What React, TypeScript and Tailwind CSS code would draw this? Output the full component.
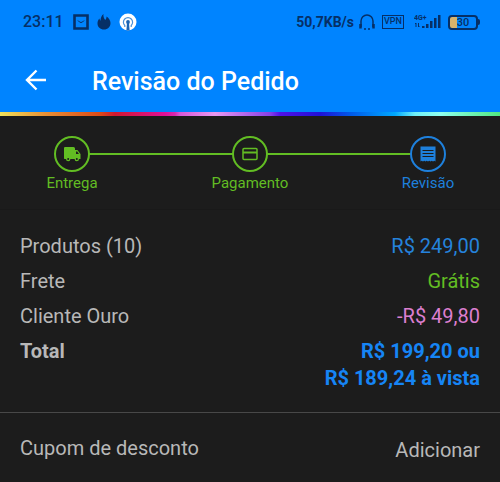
import type { ReactNode } from "react";

const steps: { label: string; color: string; icon: ReactNode }[] = [
  {
    label: "Entrega",
    color: "text-[#62bd23]",
    icon: (
      <svg viewBox="0 0 18 16" className="h-4 w-[18px]" fill="currentColor" aria-hidden="true">
        <path d="M2 1h8.500q1.500 0 1.500 1.500V4h2.400L17.500 8v5H16a2.200 2.200 0 0 1-4.400 0H7.400A2.200 2.200 0 0 1 3 13H1.500Q1 13 1 12V2.200Q1 1 2 1z" />
        <path d="M13 5.500h1.200L16 8h-3z" fill="#1c1c1c" />
        <circle cx="5.200" cy="13" r="1" fill="#1c1c1c" />
        <circle cx="13.800" cy="13" r="1" fill="#1c1c1c" />
      </svg>
    ),
  },
  {
    label: "Pagamento",
    color: "text-[#62bd23]",
    icon: (
      <svg viewBox="0 0 16 14" className="h-3.5 w-4" fill="none" stroke="currentColor" strokeWidth="1.500" aria-hidden="true">
        <rect x="1" y="1.500" width="14" height="11" rx="1" />
        <path d="M1 5.500h14" strokeWidth="2" />
      </svg>
    ),
  },
  {
    label: "Revisão",
    color: "text-[#1e80dc]",
    icon: (
      <svg viewBox="0 0 16 16" className="size-4" aria-hidden="true">
        <path fill="currentColor" d="M.5.500h15v15l-1.200-.8-1.300.8-1.200-.8-1.300.8-1.200-.8L8 15.500l-1.300-.8-1.200.8-1.300-.8-1.200.8-1.300-.8-1.200.8z" />
        <path stroke="#1c1c1c" d="M2.500 4.500h11M2.500 7.500h11M2.500 10.500h11" />
      </svg>
    ),
  },
];

const rows = [
  { label: "Produtos (10)", value: "R$ 249,00", color: "text-[#2583dc]" },
  { label: "Frete", value: "Grátis", color: "text-[#62bd23]" },
  { label: "Cliente Ouro", value: "-R$ 49,80", color: "text-[#dc7fd0]" },
];

function StatusBar() {
  return (
    <div className="flex h-11 items-center justify-between pr-5 pl-[23px] text-[#062f66]">
      <div className="flex items-center gap-2">
        <span className="w-[42px] text-base font-medium">23:11</span>
        <svg viewBox="0 0 16 16" className="size-4" fill="none" stroke="currentColor" aria-hidden="true">
          <path d="M1.500 1.500h13v13h-13z" strokeWidth="2.600" />
          <path d="M5 6.500q3 4 6 0" />
        </svg>
        <svg viewBox="0 0 14 16" className="h-4 w-3.5" fill="currentColor" aria-hidden="true">
          <path d="M6.500 0C6 2 7 4.500 8.200 6c.9-.8 1.400-2 1.300-3.500C12 4 13.500 6.500 13.500 9c0 4-2.800 6.500-6.500 6.500S.5 13 .5 9.500C.5 7.500 1.200 5.800 2.500 4.500c0 1 .3 1.700 1 2.200C3.500 4 4.500 1.500 6.500 0z" />
        </svg>
        <svg viewBox="0 0 18 18" className="size-[18px]" aria-hidden="true">
          <circle cx="9" cy="9" r="8.500" fill="#fff" />
          <path d="M5.800 14v-1.500a4.600 4.600 0 1 1 6.400 0V14" fill="none" stroke="#4a90d8" strokeWidth="1.200" />
          <circle cx="9" cy="9" r="1.900" fill="#1c64b4" />
          <path d="M8 9.500h2l.6 8H7.400z" fill="#1c64b4" />
        </svg>
      </div>
      <div className="flex items-center">
        <span className="text-sm font-bold">50,7KB/s</span>
        <svg viewBox="0 0 18 16" className="mr-1.5 ml-1 h-4 w-[18px]" fill="none" stroke="currentColor" strokeWidth="1.500" aria-hidden="true">
          <path d="M3 13V7a6 6 0 0 1 12 0v6" />
          <path d="M2.500 10v4.500M15.500 10v4.500" strokeWidth="2.500" />
          <path d="M6 15h2M10 15h2" />
        </svg>
        <span className="flex h-3.5 w-[22px] items-center justify-center border border-current text-[9px] font-medium">VPN</span>
        <svg viewBox="0 0 28 16" className="ml-2.5 h-4 w-7" aria-hidden="true">
          <text x="0" y="6" fill="currentColor" fontSize="7" fontWeight="700">4G+</text>
          <path d="M2 9v4M1 10l1-1M4.500 9v4l1-1" fill="none" stroke="currentColor" />
          <path d="M8 12h2.500v2H8zM12 10h2.500v4H12zM16 7h2.500v7H16zM20 4h2.500v10H20zM24 1h2.500v13H24z" fill="currentColor" />
        </svg>
        <span className="ml-1.5 flex h-[15px] w-[30px] items-center justify-center rounded border-2 border-current bg-[linear-gradient(to_right,#d9b36b_28%,transparent_28%)] text-[11px] leading-none font-medium">30</span>
        <span className="h-1.5 w-0.5 rounded-r bg-current" />
      </div>
    </div>
  );
}

export default function App() {
  return (
    <div className="min-h-screen bg-[#1c1c1c] font-[Roboto,sans-serif] text-[#b8b8b8]">
      <header className="bg-[#0084ff]">
        <StatusBar />
        <div className="flex h-17 items-center gap-11 px-6 pt-2 text-white">
          <button type="button" aria-label="Voltar" className="flex size-6 items-center justify-center pb-1">
            <svg viewBox="0 0 24 24" className="size-6 shrink-0" fill="none" stroke="currentColor" strokeWidth="2.400" aria-hidden="true">
              <path d="M22 12H3.500M12.500 2.500 3 12l9.500 9.500" />
            </svg>
          </button>
          <h1 className="text-[25px] leading-8 font-medium">Revisão do Pedido</h1>
        </div>
        <div className="h-1 bg-[linear-gradient(to_right,#f0e05a_0%,#e89035_9%,#dc4a18_20%,#d01830_23%,#e01098_33%,#d828b0_35%,#d858d8_36%,#e898f0_43%,#8840e8_54%,#5010e8_56%,#2010d8_64%,#0058e8_70%,#00a8ff_79%,#70f0f8_83%,#90fff0_88%,#50e880_100%)]" />
      </header>

      <ol className="relative flex justify-between pt-5 pr-[21px] pb-4 pl-[21px]">
        <li aria-hidden="true" className="absolute top-[37px] right-18 left-18 h-0.5 bg-[#62bd23]" />
        {steps.map((s) => (
          <li key={s.label} className={`relative flex w-[102px] flex-col items-center ${s.color}`}>
            <span className="flex size-9 items-center justify-center rounded-full border-2 border-current bg-[#1c1c1c]">{s.icon}</span>
            <span className="mt-px text-[15px] leading-5">{s.label}</span>
          </li>
        ))}
      </ol>

      <dl className="border-t border-[#191919] px-5 pt-[23px] pb-5 text-xl">
        {rows.map((r) => (
          <div key={r.label} className="flex justify-between pb-2 leading-[27px]">
            <dt>{r.label}</dt>
            <dd className={r.color}>{r.value}</dd>
          </div>
        ))}
        <div className="flex justify-between leading-[27px] font-bold">
          <dt>Total</dt>
          <dd className="text-right text-[#1685f5]">
            R$ 199,20 ou
            <br />
            R$ 189,24 à vista
          </dd>
        </div>
      </dl>

      <section className="flex items-end justify-between border-t border-[#484848] px-5 pt-[22px] pb-6 text-xl leading-[27px]">
        <span className="pb-0.5">Cupom de desconto</span>
        <button type="button">Adicionar</button>
      </section>
    </div>
  );
}
